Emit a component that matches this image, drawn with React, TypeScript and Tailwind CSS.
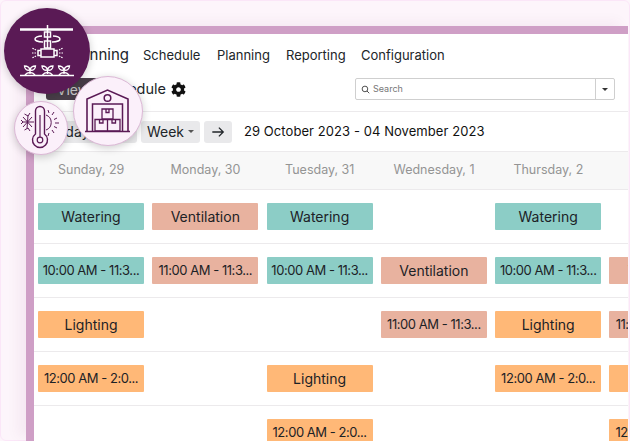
import React from "react";
import { FaCog } from "react-icons/fa";

type Kind = "w" | "v" | "l" | null;
const cls: Record<string, string> = {
  w: "bg-[#8ccdc6]",
  v: "bg-[#e8b29f]",
  l: "bg-[#ffb877]",
};

const days = ["Sunday, 29", "Monday, 30", "Tuesday, 31", "Wednesday, 1", "Thursday, 2", ""];

const rows: [Kind, string][][] = [
  [["w", "Watering"], ["v", "Ventilation"], ["w", "Watering"], [null, ""], ["w", "Watering"], [null, ""]],
  [["w", "10:00 AM - 11:3..."], ["v", "11:00 AM - 11:3..."], ["w", "10:00 AM - 11:3..."], ["v", "Ventilation"], ["w", "10:00 AM - 11:3..."], ["v", "Ventilation"]],
  [["l", "Lighting"], [null, ""], [null, ""], ["v", "11:00 AM - 11:3..."], ["l", "Lighting"], ["v", "11:00 AM - 11:3..."]],
  [["l", "12:00 AM - 2:0..."], [null, ""], ["l", "Lighting"], [null, ""], ["l", "12:00 AM - 2:0..."], ["l", "Lighting"]],
  [[null, ""], [null, ""], ["l", "12:00 AM - 2:0..."], [null, ""], [null, ""], ["l", "12:00 AM - 2:0..."]],
];

function Sprinkler() {
  return (
    <svg viewBox="0 0 86 86" className="w-[86px] h-[86px]" fill="none" stroke="#fff" strokeWidth="1.2">
      <path d="M16 21.500H69" strokeWidth="2.400" />
      <path d="M43.500 17V40M40.500 24h6v5h-6zM40.500 33h6v7h-6z" strokeWidth="1.500" />
      <path d="M38 28c-4 0-7 1.500-7 3s3 3 8 3M49 28c4 0 7 1.500 7 3s-3 3-8 3" strokeWidth="1.500" />
      <path d="M37 41h13v8H37zM34 42.500h3v5h-3zM50 42.500h3v5h-3z" strokeWidth="1.500" />
      <path d="M32 42l-4-2M32 45h-5M32 48l-4 2M55 42l4-2M55 45h5M55 48l4 2" strokeDasharray="1.500 1" />
      {[26, 43.5, 60].map((x) => (
        <g key={x} strokeWidth="1.300">
          <path d={`M${x} 66v-4M${x} 62c-.5-2.500-3-4-5.500-4 0 3 2.500 5 5.500 4zM${x} 62c.5-2.500 3-4 5.500-4 0 3-2.500 5-5.500 4z`} />
          <path d={`M${x - 5} 67c1.500-2 3-2.500 5-2.500s3.500 .5 5 2.500`} />
        </g>
      ))}
      <path d="M16 67.500H70" strokeWidth="1.600" />
    </svg>
  );
}

function Warehouse() {
  return (
    <svg viewBox="0 0 70 70" className="w-[70px] h-[70px] shrink-0" fill="none" stroke="#5a1a55" strokeWidth="1.500">
      <path d="M14 55V23L34.500 14 55 23v32" strokeWidth="1.600" />
      <circle cx="34.500" cy="22" r="3.300" />
      <path d="M19.500 55V28h30v27" />
      <path d="M12 55.500h45" strokeWidth="1.700" />
      <path d="M29 33h11v10H29zM33 33v3.500h3V33M22 43.500h12.500V55H22zM34.500 43.500H47V55H34.500zM26.500 43.500V47h3.500v-3.500M39 43.500V47h3.500v-3.500" strokeWidth="1.300" />
    </svg>
  );
}

function ThermoSnow() {
  return (
    <svg viewBox="0 0 54 54" className="w-[54px] h-[54px] shrink-0" fill="none" stroke="#5a1a55" strokeWidth="1.200">
      <path d="M21.500 33V10a4.500 4.500 0 0 1 9 0v23a7.500 7.500 0 1 1-9 0z" strokeWidth="1.400" />
      <circle cx="26" cy="39" r="2.800" />
      <path d="M26 36V14" />
      <path d="M9 21h11M14 14.500l-1 13M9 16l9 10M9 26l9-10M7 19l2 2-2 2M10.500 13l3.500 2 2-3M10.500 29l3.500-2 2 3" strokeWidth="1" />
      <path d="M32 14a8 8 0 0 1 0 15M34 9l1 3M40 11l-2 3M43 17l-3 1.500M45 22h-4M43 27l-3-1.500M40 32l-2-3M34 35l1-3" strokeWidth="1" />
    </svg>
  );
}

export default function App() {
  return (
    <div className="relative w-[630px] h-[441px] overflow-hidden bg-[#fdf5fb] pt-[26px] pl-[26px] pr-[2px] font-['Inter','Liberation_Sans',sans-serif] text-[#212529]">
      <div className="absolute inset-0 rounded-[6px] border border-[#fbe6f8] pointer-events-none" />
      <div className="relative h-[415px] border-t-[8px] border-l-[8px] border-[#cf9fc6] bg-white overflow-hidden shadow-[-8px_-4px_12px_rgba(90,26,85,0.05)]">
        <nav className="flex items-center h-[43px] pl-[33px] text-[13px]">
          <span className="text-[15px] w-[62px] text-right whitespace-nowrap">Planning</span>
          <div className="flex items-center gap-[17px] ml-[14px]">
            <span className="w-[57px] whitespace-nowrap">Schedule</span>
            <span className="w-[52px] whitespace-nowrap">Planning</span>
            <span className="w-[58px] whitespace-nowrap">Reporting</span>
            <span className="whitespace-nowrap">Configuration</span>
          </div>
        </nav>

        <div className="flex items-start h-[35px] pl-[12px] pt-px border-b border-[#eceaec]">
          <span className="flex items-center justify-center w-[54px] h-[22px] rounded-[3px] bg-[#4a3f4a] text-[#ccc] text-[14px]">
            View
          </span>
          <span className="flex items-center h-[22px] text-[14.500px] ml-[2px] w-[66px] whitespace-nowrap">Schedule</span>
          <span className="flex items-center h-[22px] ml-[3px] text-[15px] text-[#111]">
            <FaCog />
          </span>
          <div className="flex items-center w-[260px] h-[22px] ml-[169px] border border-[#cfcfcf] rounded-[2px] text-[9px] text-[#777]">
            <svg viewBox="0 0 24 24" className="w-[9px] h-[9px] ml-[5px]" fill="none" stroke="#444" strokeWidth="2.500">
              <circle cx="10.500" cy="10.500" r="7.500" />
              <path d="M16 16l6 6" />
            </svg>
            <span className="ml-[3px] flex-1">Search</span>
            <span className="flex items-center justify-center w-[19px] h-full border-l border-[#cfcfcf]">
              <span className="w-0 h-0 border-x-[3px] border-x-transparent border-t-[3px] border-t-[#333]" />
            </span>
          </div>
        </div>

        <div className="flex items-center h-[40px] pl-[8px] text-[14px] border-b border-[#eceaec]">
          <span className="flex items-center w-[95px] h-[22px] pl-[7px] bg-[#e9e9eb] rounded-[3px]">Today</span>
          <span className="flex items-center justify-center gap-[4px] w-[59px] h-[22px] ml-[4px] bg-[#e9e9eb] rounded-[3px]">
            Week
            <span className="w-0 h-0 border-x-[3px] border-x-transparent border-t-[3px] border-t-[#555]" />
          </span>
          <span className="flex items-center justify-center w-[28px] h-[22px] ml-[4px] bg-[#e9e9eb] rounded-[3px]">
            <svg viewBox="0 0 16 16" className="w-[14px] h-[14px]" fill="none" stroke="#212529" strokeWidth="1.500">
              <path d="M1.500 8H14M9 3l5 5-5 5" />
            </svg>
          </span>
          <span className="ml-[12px] whitespace-nowrap text-[13px] tracking-[0.07px] text-[#111]">29 October 2023 - 04 November 2023</span>
        </div>

        <div className="grid grid-cols-[repeat(6,114.3px)] h-[38px] items-center bg-[#f8f8f8] border-b border-[#eceaec] text-[12.500px] text-[#949494]">
          {days.map((d, i) => (
            <span key={i} className="text-center whitespace-nowrap">{d}</span>
          ))}
        </div>

        {rows.map((row, i) => (
          <div key={i} className="grid grid-cols-[repeat(6,114.3px)] h-[54px] border-b border-[#eceaec]">
            {row.map(([k, t], j) => (
              <div key={j} className="pt-[13px] pl-[4px] pr-[4.300px]">
                {k && (
                  <div
                    className={`${cls[k]} flex items-center justify-center h-[27px] w-[106px] rounded-[1px] text-[#1c2226] whitespace-nowrap overflow-hidden ${
                      t.includes(":") ? "text-[13px] tracking-[-0.45px]" : "text-[14px]"
                    }`}
                  >
                    {t}
                  </div>
                )}
              </div>
            ))}
          </div>
        ))}
      </div>

      <div className="absolute left-[4px] top-[8px] flex items-center justify-center w-[86px] h-[86px] rounded-full bg-[#5a1a55] shadow-[0_2px_8px_rgba(0,0,0,0.2)]">
        <Sprinkler />
      </div>
      <div className="absolute left-[14px] top-[101px] flex items-center justify-center w-[54px] h-[54px] rounded-full bg-[#fbf0fa] border border-[#dcb8d6] shadow-[0_2px_8px_rgba(0,0,0,0.2)]">
        <ThermoSnow />
      </div>
      <div className="absolute left-[73px] top-[76px] flex items-center justify-center w-[70px] h-[70px] rounded-full bg-[#fbf0fa] border border-[#dcb8d6] shadow-[0_2px_8px_rgba(0,0,0,0.2)]">
        <Warehouse />
      </div>
    </div>
  );
}
